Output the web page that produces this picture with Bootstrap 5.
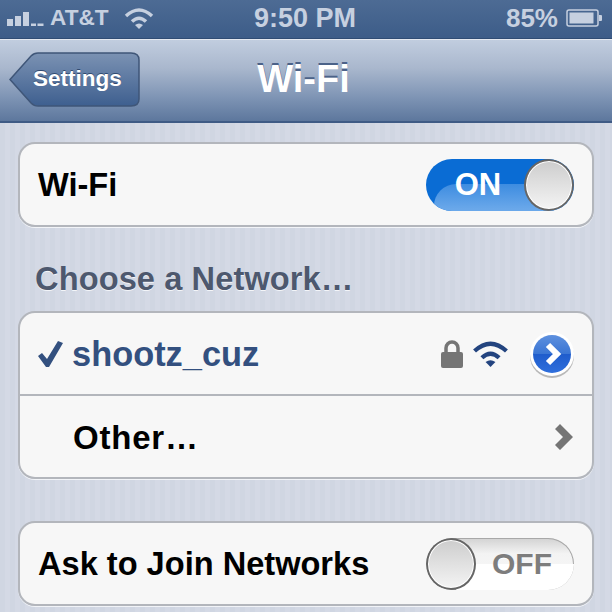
<!DOCTYPE html>
<html lang="en">
<head>
    <meta charset="UTF-8">
    <meta name="viewport" content="width=device-width, initial-scale=1.0">
    <title>Wi-Fi Networks</title>

    <link href="https://cdn.jsdelivr.net/npm/bootstrap@5.3.0/dist/css/bootstrap.min.css" rel="stylesheet">

    <style>
        body {
            height: 612px;
            overflow: hidden;
            font-family: "Liberation Sans", Arial, sans-serif;
            font-weight: 700;
            background-color: #d2d8e4;
            background-image: repeating-linear-gradient(90deg, #d0d6e2 0, #d0d6e2 5px, #d4d9e5 5px, #d4d9e5 10px);
        }
        .status-strip {
            height: 39px;
            padding: 0 9px 3px 7px;
            background: linear-gradient(#4d6b94, #3c5c88);
            color: #c6d0e0;
            font-size: 22.6px;
            box-shadow: inset 0 -1px 0 #2f4c74;
        }
        .status-side { width: 240px; }
        .status-time { font-size: 27px; }
        .status-pct { font-size: 26px; }
        .signal-bars { margin-right: 5px; }
        .wifi-status { margin-left: 15px; }
        .title-bar {
            height: 84px;
            padding: 12px 14px 15px 9px;
            display: grid;
            grid-template-columns: 1fr auto 1fr;
            background: linear-gradient(#c1cddf 0, #a9b7cd 35%, #7f95b5 70%, #5d779d 100%);
            border-top: 1px solid #e3e8f0;
            border-bottom: 2px solid #3f5b85;
        }
        .title-text {
            font-size: 38px;
            line-height: 54px;
            color: #fff;
            text-shadow: 0 -2px 0 #4b6288;
        }
        .back-btn {
            position: relative;
            width: 131px;
            height: 55px;
            padding-left: 24px;
            color: #fff;
            font-size: 22.5px;
            line-height: 53px;
            text-shadow: 0 -1px 0 #2f4a70;
        }
        .back-shape { position: absolute; top: 0; left: 0; }
        .back-label { position: relative; }
        .page-body { padding: 19px 18px 0; }
        .cell-group {
            --bs-list-group-bg: #f7f7f7;
            --bs-list-group-border-color: #b3b6bc;
            --bs-list-group-border-radius: 17px;
            --bs-list-group-border-width: 2px;
            box-shadow: 0 1px 0 #f2f4f8;
        }
        .cell-row {
            height: 85px;
            padding: 0 18px;
            font-size: 32.6px;
            color: #000;
        }
        .cell-row.second { height: 83px; padding-left: 53px; font-size: 33px; letter-spacing: 0.8px; }
        .cell-text { padding-top: 2px; }
        .net-picked { padding-left: 18px; color: #33507f; }
        .net-name { font-size: 34.4px; }
        .tick { margin-right: 9px; }
        .lock-gap { margin-right: 9px; }
        .wifi-gap { margin-right: 20px; }
        .section-head {
            margin: 35px 0 15px 17px;
            font-size: 32.6px;
            line-height: 34px;
            letter-spacing: 0.1px;
            color: #4d586e;
            text-shadow: 0 1px 0 #f3f5f9;
        }
        .gap-third { margin-top: 42px; }
        .switch-on, .switch-off {
            position: relative;
            width: 148px;
            height: 52px;
            border-radius: 26px;
            overflow: hidden;
            font-size: 31px;
            line-height: 52px;
        }
        .switch-on {
            color: #fff;
            background: #0a6cd4;
        }
        .switch-off {
            color: #7d7d7d;
            background: linear-gradient(#d2d2d2, #f3f3f3 30%, #fafafa);
            box-shadow: inset 0 0 0 1px #a8a8a8;
        }
        .switch-on::before {
            content: "";
            position: absolute;
            left: 8px;
            right: 0;
            top: 25px;
            height: 50px;
            border-radius: 22px;
            background: linear-gradient(#3d8ce0, #6aa8ea 50%);
        }
        .switch-off::before {
            content: "";
            position: absolute;
            left: 30px;
            right: 0;
            top: 26px;
            height: 50px;
            border-radius: 22px 0 0 0;
            background: #fff;
        }
        .switch-label { position: relative; flex-grow: 1; text-align: center; }
        .switch-knob {
            position: relative;
            flex: 0 0 50px;
            height: 52px;
            border-radius: 50%;
            background: linear-gradient(#cdcdcd, #f4f4f4);
            border: 2px solid #666;
            box-shadow: inset 0 0 0 1px #fff;
        }
        .on-text { padding-left: 6px; }
        .off-text { padding-right: 6px; font-size: 30px; text-shadow: 0 1px 0 #fff; }
        .disclosure-btn { margin-right: -1px; }
        .chevron-grey { margin-right: 1px; }
    </style>
</head>
<body>

    <div class="status-strip d-flex justify-content-between align-items-center">
        <div class="status-side d-flex align-items-center">
            <svg width="38" height="20" viewBox="0 0 38 20" fill="#c6d0e0" class="signal-bars">
                <rect x="0" y="11" width="6" height="7"/>
                <rect x="8" y="8" width="6" height="10"/>
                <rect x="16" y="4" width="6" height="14"/>
                <rect x="24" y="15.5" width="5" height="2.5"/>
                <rect x="30.5" y="15.5" width="6" height="2.5"/>
            </svg>
            <span>AT&amp;T</span>
            <svg width="30" height="22" viewBox="0 0 30 22" class="wifi-status">
                <path d="M2 9 Q15 -3 28 9" fill="none" stroke="#c6d0e0" stroke-width="3.5"/>
                <path d="M8 14.5 Q15 8 22 14.5" fill="none" stroke="#c6d0e0" stroke-width="3.5"/>
                <path d="M15 22 L11 18 Q15 15 19 18 Z" fill="#c6d0e0"/>
            </svg>
        </div>
        <div class="status-time">9:50 PM</div>
        <div class="status-side d-flex align-items-center justify-content-end">
            <span class="status-pct me-2">85%</span>
            <svg width="37" height="18" viewBox="0 0 37 18">
                <rect x="1" y="1" width="31" height="16" rx="2" fill="none" stroke="#c6d0e0" stroke-width="1.5"/>
                <rect x="3.5" y="3.5" width="24" height="11" fill="#c6d0e0"/>
                <path d="M33 6 h2 a1 1 0 0 1 1 1 v4 a1 1 0 0 1 -1 1 h-2 Z" fill="#c6d0e0"/>
            </svg>
        </div>
    </div>

    <div class="title-bar">
        <div class="back-btn">
            <svg class="back-shape" width="131" height="55" viewBox="0 0 131 55">
                <defs>
                    <linearGradient id="backFill" x1="0" y1="0" x2="0" y2="1">
                        <stop offset="0" stop-color="#7b92b3"/>
                        <stop offset="1" stop-color="#3e5f8f"/>
                    </linearGradient>
                </defs>
                <path d="M1 27.5 L22 4 Q25 1 29 1 H122 Q130 1 130 8 V47 Q130 54 122 54 H29 Q25 54 22 51 Z" fill="url(#backFill)" stroke="#3f5678" stroke-width="1.5"/>
            </svg>
            <span class="back-label">Settings</span>
        </div>
        <div class="title-text">Wi-Fi</div>
        <div></div>
    </div>

    <div class="page-body">
        <ul class="list-group cell-group">
            <li class="list-group-item cell-row d-flex align-items-center justify-content-between">
                <span class="cell-text">Wi-Fi</span>
                <div class="switch-on d-flex">
                    <span class="switch-label on-text">ON</span>
                    <span class="switch-knob"></span>
                </div>
            </li>
        </ul>

        <div class="section-head">Choose a Network…</div>

        <ul class="list-group cell-group">
            <li class="list-group-item cell-row net-picked d-flex align-items-center">
                <svg class="tick" width="25" height="26" viewBox="0 0 25 26" fill="#33507f">
                    <path d="M0 15 L4 12 L9 18 L20 0 L25 2 L11 26 L8 26 Z"/>
                </svg>
                <span class="net-name cell-text flex-grow-1">shootz_cuz</span>
                <svg width="22" height="28" viewBox="0 0 22 28" class="lock-gap">
                    <path d="M5 13 V8 a6 6 0 0 1 12 0 V13" fill="none" stroke="#757575" stroke-width="3.5"/>
                    <rect x="0" y="12" width="22" height="16" rx="2" fill="#757575"/>
                </svg>
                <svg width="37" height="27" viewBox="0 0 30 22" class="wifi-gap">
                    <path d="M2 9 Q15 -3 28 9" fill="none" stroke="#23447f" stroke-width="3.5"/>
                    <path d="M8 14.5 Q15 8 22 14.5" fill="none" stroke="#23447f" stroke-width="3.5"/>
                    <path d="M15 22 L11 18 Q15 15 19 18 Z" fill="#23447f"/>
                </svg>
                <svg width="46" height="48" viewBox="0 0 46 48" class="disclosure-btn">
                    <defs>
                        <linearGradient id="discFill" x1="0" y1="0" x2="0" y2="1">
                            <stop offset="0" stop-color="#5e90de"/>
                            <stop offset="0.5" stop-color="#3a75d4"/>
                            <stop offset="0.5" stop-color="#1f5ccc"/>
                            <stop offset="1" stop-color="#2f6fdc"/>
                        </linearGradient>
                    </defs>
                    <circle cx="23" cy="26" r="22" fill="#8d8d8d" opacity="0.6"/>
                    <circle cx="23" cy="24" r="22" fill="#fff"/>
                    <circle cx="23" cy="24" r="19" fill="url(#discFill)"/>
                    <polyline points="19,15 28,24 19,33" fill="none" stroke="#fff" stroke-width="6"/>
                </svg>
            </li>
            <li class="list-group-item cell-row second d-flex align-items-center justify-content-between">
                <span class="cell-text">Other…</span>
                <svg width="18" height="26" viewBox="0 0 18 26" class="chevron-grey">
                    <path d="M0 5 L5 0 L18 13 L5 26 L0 21 L8 13 Z" fill="#757575"/>
                </svg>
            </li>
        </ul>

        <ul class="list-group cell-group gap-third">
            <li class="list-group-item cell-row d-flex align-items-center justify-content-between">
                <span class="cell-text">Ask to Join Networks</span>
                <div class="switch-off d-flex">
                    <span class="switch-knob"></span>
                    <span class="switch-label off-text">OFF</span>
                </div>
            </li>
        </ul>
    </div>

    <script src="https://cdn.jsdelivr.net/npm/bootstrap@5.3.0/dist/js/bootstrap.bundle.min.js"></script>
</body>
</html>
